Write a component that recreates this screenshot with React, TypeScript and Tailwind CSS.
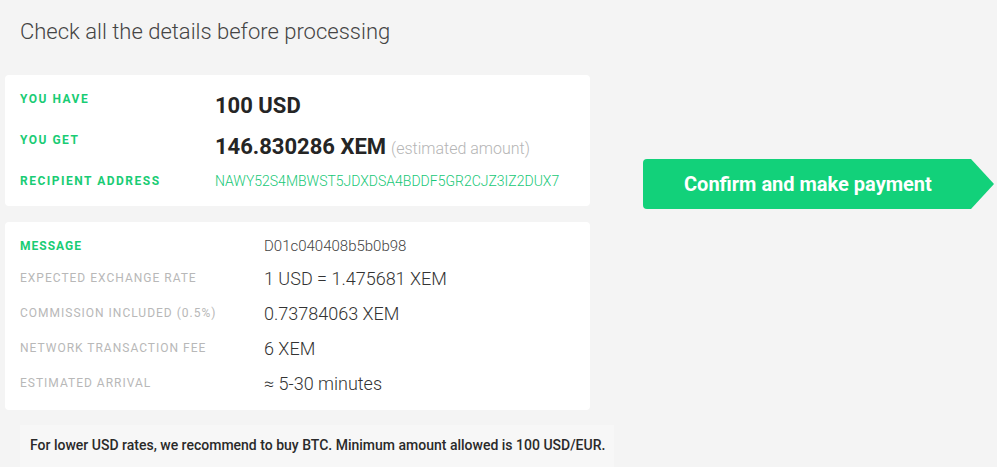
import React from "react";

const green = "text-[#19cc74]";

function TopRow({ label, children, last }: { label: string; children: React.ReactNode; last?: boolean }) {
  return (
    <div className={`flex items-start ${last ? "h-[16px]" : "h-[41px]"}`}>
      <div className={`w-[195px] shrink-0 text-[12px] leading-[16px] font-bold tracking-[1.5px] ${green}`}>{label}</div>
      <div className={`flex items-baseline ${last ? "" : "mt-[1px]"}`}>{children}</div>
    </div>
  );
}

function DetailRow({ label, value, highlight }: { label: string; value: string; highlight?: boolean }) {
  return (
    <div className={`flex items-center ${highlight ? "h-[28px]" : "h-[35px]"}`}>
      <div
        className={`w-[244px] shrink-0 text-[12px] leading-[16px] tracking-[1px] ${
          highlight ? `font-bold tracking-[1.5px] ${green}` : "text-[#b8b8b8]"
        }`}
      >
        {label}
      </div>
      <div className={highlight ? "text-[15px] text-[#444] font-light" : "text-[18px] leading-[24px] font-light text-[#333] pt-[3px]"}>
        {value}
      </div>
    </div>
  );
}

export default function App() {
  return (
    <div
      className="w-[997px] h-[467px] bg-[#f4f4f4] overflow-hidden flex"
      style={{ fontFamily: "Roboto, 'Noto Sans', sans-serif" }}
    >
      <div className="w-[590px] pl-[5px] shrink-0">
        <h1 className="pl-[15px] pt-[17px] h-[75px] text-[22px] leading-[30px] font-light text-[#444]">
          Check all the details before processing
        </h1>

        <div className="bg-white rounded-[4px] pl-[15px] pt-[16px] pb-[17px]">
          <TopRow label="YOU HAVE">
            <span className="text-[22px] leading-[28px] font-bold text-[#252525]">100 USD</span>
          </TopRow>
          <TopRow label="YOU GET">
            <span className="text-[22px] leading-[28px] font-bold text-[#252525]">146.830286 XEM</span>
            <span className="ml-[5px] text-[16px] font-light text-[#b5b5b5]">(estimated amount)</span>
          </TopRow>
          <TopRow label="RECIPIENT ADDRESS" last>
            <span className="text-[14px] leading-[16px] font-light text-[#17c877]">NAWY52S4MBWST5JDXDSA4BDDF5GR2CJZ3IZ2DUX7</span>
          </TopRow>
        </div>

        <div className="mt-[16px] bg-white rounded-[4px] pl-[15px] pt-[10px] pb-[10px]">
          <DetailRow label="MESSAGE" value="D01c040408b5b0b98" highlight />
          <DetailRow label="EXPECTED EXCHANGE RATE" value="1 USD = 1.475681 XEM" />
          <DetailRow label="COMMISSION INCLUDED (0.5%)" value="0.73784063 XEM" />
          <DetailRow label="NETWORK TRANSACTION FEE" value="6 XEM" />
          <DetailRow label="ESTIMATED ARRIVAL" value="≈ 5-30 minutes" />
        </div>

        <div className="ml-[15px] mt-[15px] w-[594px] h-[45px] bg-[#f7f7f7] pl-[10px] pt-[11px] text-[14px] leading-[18px] font-medium text-[#2a2a2a]">
          For lower USD rates, we recommend to buy BTC. Minimum amount allowed is 100 USD/EUR.
        </div>
      </div>

      <div className="pl-[53px] pt-[159px]">
        <button className="relative flex items-center h-[50px] w-[327px] bg-[#12d17a] rounded-l-[4px] pl-[41px] text-[20px] font-bold text-white">
          Confirm and make payment
          <svg className="absolute left-full top-0" width="24" height="50" viewBox="0 0 24 50">
            <polygon points="0,0 0,50 1,50 24,25 1,0" fill="#12d17a" />
          </svg>
        </button>
      </div>
    </div>
  );
}
